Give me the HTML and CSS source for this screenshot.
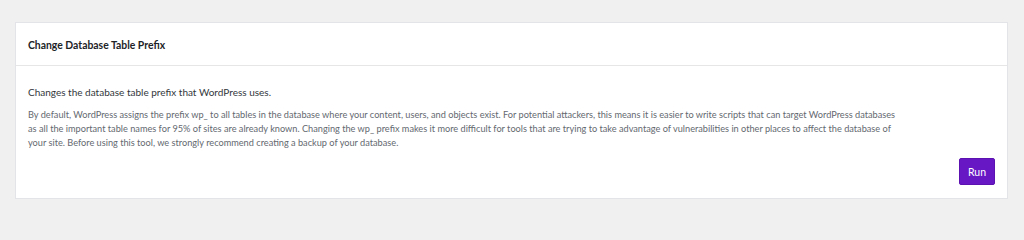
FILE: index.html
```html
<!DOCTYPE html>
<html>
<head>
<meta charset="utf-8">
<link rel="stylesheet" href="styles.css">
</head>
<body>
<div class="card">
  <div class="card-header">
    <h2 class="card-title">Change Database Table Prefix</h2>
  </div>
  <div class="card-body">
    <p class="lead">Changes the database table prefix that WordPress uses.</p>
    <p class="desc">By default, WordPress assigns the prefix wp_ to all tables in the database where your content, users, and objects exist. For potential attackers, this means it is easier to write scripts that can target WordPress databases as all the important table names for 95% of sites are already known. Changing the wp_ prefix makes it more difficult for tools that are trying to take advantage of vulnerabilities in other places to affect the database of your site. Before using this tool, we strongly recommend creating a backup of your database.</p>
    <div class="actions">
      <button class="btn-run">Run</button>
    </div>
  </div>
</div>
</body>
</html>
```
FILE: styles.css
```css
html, body {
  margin: 0;
  padding: 0;
  background: #f0f0f1;
  font-family: "Lato", "Noto Sans", sans-serif;
}
body {
  padding: 22px 16px 0 15px;
}
.card {
  background: #fff;
  border: 1px solid #e2e4e7;
  box-sizing: border-box;
  height: 177px;
}
.card-header {
  height: 42px;
  border-bottom: 1px solid #e6e6e6;
  display: flex;
  align-items: center;
  padding: 0 12px;
}
.card-title {
  margin: 1px 0 0 0;
  font-size: 10.4px;
  font-weight: 700;
  color: #1d2327;
}
.card-body {
  padding: 17px 12px 12px 12px;
}
.lead {
  margin: 0;
  font-size: 10px;
  line-height: 18px;
  color: #32373c;
}
.desc {
  margin: 7px 0 0 0;
  font-size: 9.2px;
  line-height: 14px;
  color: #646970;
  max-width: 874px;
}
.actions {
  display: flex;
  justify-content: flex-end;
  margin-top: 8px;
  padding-right: 0;
}
.btn-run {
  background: #6817c5;
  color: #fff;
  border: 1px solid #5c12b0;
  border-radius: 2px;
  width: 36px;
  height: 27px;
  font-family: inherit;
  font-size: 10.5px;
  padding: 0;
}
```
